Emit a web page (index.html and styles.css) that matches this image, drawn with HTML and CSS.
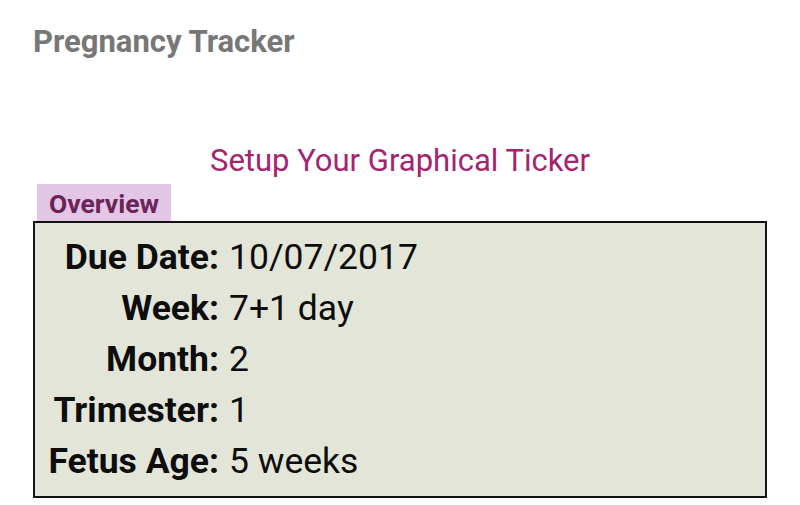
FILE: index.html
```html
<!DOCTYPE html>
<html>
<head>
<meta charset="utf-8">
<link rel="stylesheet" href="styles.css">
</head>
<body>
<header class="app-title">Pregnancy Tracker</header>
<h2 class="subtitle">Setup Your Graphical Ticker</h2>
<div class="tab">Overview</div>
<section class="overview">
  <div class="row"><span class="label">Due Date:</span><span class="value">10/07/2017</span></div>
  <div class="row"><span class="label">Week:</span><span class="value">7+1 day</span></div>
  <div class="row"><span class="label">Month:</span><span class="value">2</span></div>
  <div class="row"><span class="label">Trimester:</span><span class="value">1</span></div>
  <div class="row"><span class="label">Fetus Age:</span><span class="value">5 weeks</span></div>
</section>
</body>
</html>
```
FILE: styles.css
```css
html, body {
  margin: 0;
  padding: 0;
  background: #ffffff;
  font-family: Roboto, "Liberation Sans", sans-serif;
  overflow: hidden;
}
.app-title {
  font-weight: 700;
  font-size: 31px;
  color: #777777;
  padding: 24px 0 0 33px;
  line-height: 36px;
}
.subtitle {
  margin: 83px 0 0 0;
  text-align: center;
  font-weight: 400;
  font-size: 31px;
  color: #a3246f;
  line-height: 36px;
}
.tab {
  display: inline-block;
  margin: 5px 0 0 37px;
  padding: 2px 12px 0 12px;
  background: #e3c6e6;
  color: #6b2459;
  font-weight: 700;
  font-size: 26.5px;
  line-height: 35px;
  vertical-align: top;
}
.overview {
  margin: 0 33px;
  border: 2px solid #111111;
  background: #e2e5d8;
  padding: 9px 0 9px 0;
  display: flex;
  flex-direction: column;
}
.row {
  display: grid;
  grid-template-columns: 184px 1fr;
  column-gap: 10px;
  font-size: 35.5px;
  line-height: 51px;
  color: #0d0d0d;
}
.label {
  text-align: right;
  font-weight: 700;
}
.value {
  font-weight: 400;
}
```
